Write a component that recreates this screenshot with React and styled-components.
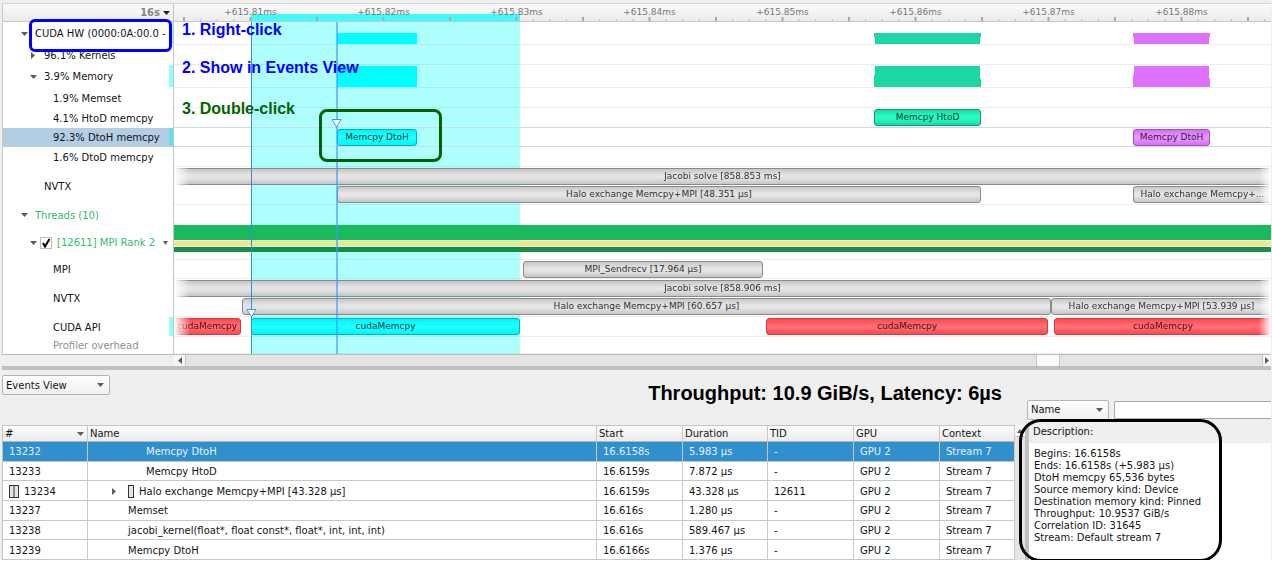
import React, { useState } from "react";
import styled, { createGlobalStyle, css } from "styled-components";

const GlobalStyle = createGlobalStyle`
  *, *::before, *::after { box-sizing: border-box; }
  body {
    margin: 0;
    background: #fff;
    color: #141414;
    font-family: "DejaVu Sans", sans-serif;
    font-size: 10px;
    line-height: 12px;
  }
  button, select, input { font: inherit; color: inherit; }
`;

/* Width of the visible time range; every position below is in these units. */
const SPAN = 1097;
const pct = (units) => `${(units / SPAN) * 100}%`;

const Window = styled.main`
  background: #efefef;
  padding: 3px 1px 0 2px;
`;

/* ---------- timeline ---------- */

const Timeline = styled.section`
  display: grid;
  grid-template-columns: 172px minmax(0, 1fr);
  border-top: 1px solid #d4d4d4;
  border-bottom: 1px solid #bdbdbd;
`;

const Tree = styled.div`
  position: relative;
  background: #fff;
  border-left: 1px solid #c8c8c8;
  border-right: 1px solid #c4c4c4;
`;

const headBar = css`
  height: 18px;
  background: linear-gradient(#fafafa, #ebebeb);
  border-bottom: 1px solid #c8c8c8;
`;

const TreeHead = styled.div`
  ${headBar}
  display: flex;
  align-items: center;
  justify-content: flex-end;
  gap: 3px;
  padding-right: 3px;
  color: #858585;
  font-weight: bold;
`;

const TreeRow = styled.div`
  display: flex;
  align-items: center;
  height: ${(p) => p.$height}px;
  padding-left: ${(p) => 17 + p.$level * 9}px;
  background: ${(p) => (p.$selected ? "#b3cde3" : "transparent")};
  color: ${(p) => p.$color || "#141414"};
`;

const Toggle = styled.button`
  display: flex;
  align-items: center;
  justify-content: center;
  flex: none;
  width: 8px;
  height: 12px;
  margin-right: 7px;
  padding: 0;
  border: 0;
  background: none;
`;

const ToggleSpace = styled.span`
  flex: none;
  width: 15px;
`;

const RowText = styled.span`
  flex: 1;
  min-width: 0;
  padding-top: 1px;
  overflow: hidden;
  white-space: nowrap;
`;

const CheckLabel = styled.label`
  position: relative;
  display: flex;
  align-items: center;
  flex: 1;
  gap: 5px;
  margin-left: -4px;
  white-space: nowrap;
`;

const CheckBox = styled.input`
  appearance: none;
  width: 12px;
  height: 12px;
  margin: 0;
  border: 1px solid #bdbdbd;
  background: #fff;
`;

const CheckMark = styled.svg`
  position: absolute;
  left: 2px;
  top: 1px;
  pointer-events: none;
`;

const MenuButton = styled(Toggle)`
  margin-right: 0;
`;

const RowMark = styled.span`
  align-self: stretch;
  flex: none;
  width: 4px;
  margin-bottom: 1px;
  background: ${(p) => (p.$on ? (p.$selected ? "#5ce4ee" : "#8cffff") : "transparent")};
`;

const Canvas = styled.div`
  position: relative;
  background: #fff;
  overflow: hidden;
`;

const Ruler = styled.div`
  ${headBar}
  position: relative;
`;

const RulerSelection = styled.div`
  position: absolute;
  left: ${(p) => pct(p.$from)};
  width: ${(p) => pct(p.$to - p.$from)};
  bottom: 0;
  height: 7px;
  background: #3ffbfb;
`;

const Ticks = styled.svg`
  position: absolute;
  left: 0;
  bottom: 0;
  width: 100%;
  height: 4px;
`;

const RulerLabels = styled.div`
  position: relative;
  display: grid;
  grid-template-columns: 10fr repeat(8, 133fr) 23fr;
  padding-top: 2px;
  color: #787878;
  font-size: 9px;
  text-align: center;

  & > :first-child { grid-column-start: 2; }
`;

const Selection = styled.div`
  position: absolute;
  left: ${(p) => pct(p.$from)};
  width: ${(p) => pct(p.$to - p.$from)};
  top: 18px;
  bottom: 0;
  background: #b0ffff;
`;

const Track = styled.div`
  position: relative;
  display: flex;
  flex-direction: column;
  gap: 1px;
  height: ${(p) => p.$height}px;
  padding-top: ${(p) => p.$top ?? 1}px;
  border-bottom: 1px solid ${(p) => (p.$blue ? "#c6dceb" : "rgba(0, 0, 0, 0.07)")};
`;

const Lane = styled.div`
  display: grid;
  grid-template-columns: ${(p) => p.$columns};
  flex: none;
`;

const skins = {
  gray: { edge: "#8a8a8a", out: "#c6c6c6", mid: "#e4e4e4", text: "#303030" },
  cyan: { edge: "#00b4b8", out: "#00f4f8", mid: "#1effff", text: "#083c3e" },
  teal: { edge: "#12996f", out: "#1ad9a4", mid: "#27fac4", text: "#083c2c" },
  violet: { edge: "#a14fbc", out: "#d76cf8", mid: "#e695ff", text: "#381842" },
  red: { edge: "#cf3c46", out: "#ff4750", mid: "#ff6c72", text: "#461216" },
};

const fades = {
  left: "linear-gradient(to right, transparent, #000 16px)",
  right: "linear-gradient(to left, transparent, #000 12px)",
  both: "linear-gradient(to right, transparent, #000 16px, #000 calc(100% - 12px), transparent)",
};

const Bar = styled.div`
  height: 17px;
  padding: 0 3px;
  overflow: hidden;
  border: 1px solid ${(p) => skins[p.$skin].edge};
  border-radius: 3px;
  background: linear-gradient(
    ${(p) => skins[p.$skin].out},
    ${(p) => skins[p.$skin].mid} 40%,
    ${(p) => skins[p.$skin].mid} 60%,
    ${(p) => skins[p.$skin].out}
  );
  color: ${(p) => skins[p.$skin].text};
  font-size: 9px;
  line-height: 14px;
  text-align: center;
  text-overflow: ellipsis;
  white-space: nowrap;
  ${(p) => p.$fade && css`
    mask-image: ${fades[p.$fade]};
    ${p.$fade !== "right" && "border-left: 0; border-top-left-radius: 0; border-bottom-left-radius: 0;"}
    ${p.$fade !== "left" && "border-right: 0; border-top-right-radius: 0; border-bottom-right-radius: 0;"}
  `}
`;

const notches = {
  none: "none",
  low: "polygon(0 0, 100% 0, 100% 40%, calc(100% - 1px) 40%, calc(100% - 1px) 100%, 1px 100%, 1px 40%, 0 40%)",
  high: "polygon(1px 0, calc(100% - 1px) 0, calc(100% - 1px) 60%, 100% 60%, 100% 100%, 0 100%, 0 40%, 1px 40%)",
};

const Load = styled.div`
  height: ${(p) => p.$height}px;
  background: ${(p) => p.$color};
  clip-path: ${(p) => notches[p.$notch]};
`;

const Stripe = styled.div`
  flex: none;
  height: ${(p) => p.$height}px;
  background: ${(p) => p.$color};
`;

const Cursor = styled.div`
  position: absolute;
  left: ${(p) => pct(p.$at)};
  top: 18px;
  bottom: 0;
  width: ${(p) => (p.$soft ? 2 : 1)}px;
  background: ${(p) => (p.$soft ? "rgba(60, 150, 255, 0.6)" : "#2f8fe0")};
`;

const CursorHead = styled.svg`
  position: absolute;
  left: -5px;
  top: ${(p) => p.$top}px;
`;

/* ---------- callouts drawn over the window ---------- */

const Note = styled.p`
  position: absolute;
  left: 8px;
  top: ${(p) => p.$top}px;
  margin: 0;
  color: ${(p) => p.$color};
  font: bold 16px/18px "Liberation Sans", sans-serif;
  white-space: nowrap;
`;

const Outline = styled.div`
  position: absolute;
  border: 3px solid ${(p) => p.$color};
  border-radius: ${(p) => p.$radius}px;
  pointer-events: none;
`;

const TreeOutline = styled(Outline)`
  left: 26px;
  right: 1px;
  top: 15px;
  height: 33px;
`;

const EventOutline = styled(Outline)`
  left: ${pct(145)};
  width: ${pct(123)};
  top: 105px;
  height: 53px;
`;

const DetailsOutline = styled(Outline)`
  left: -10px;
  width: 203px;
  top: -6px;
  bottom: -2px;
`;

/* ---------- scroll bars ---------- */

const HScroll = styled.div`
  display: grid;
  grid-template-columns: 12px 850fr 24px 202fr 9px;
  height: 11px;
  margin-left: 172px;
  background: #e4e4e4;

  & > :last-child { grid-column: 5; }
`;

const ScrollButton = styled.button`
  display: flex;
  align-items: center;
  justify-content: center;
  padding: 0;
  border: 0 solid #c6c6c6;
  border-width: ${(p) => p.$edge};
  background: #f7f7f7;
`;

const Thumb = styled.div`
  grid-column: 3;
  border: solid #c6c6c6;
  border-width: 0 1px;
  background: #fafafa;
`;

const Splitter = styled.div`
  height: 4px;
  background: #c0c0c0;
`;

/* ---------- events view ---------- */

const Events = styled.section`
  display: grid;
  grid-template-columns: minmax(0, 1fr) 246px;
  grid-template-rows: 55px 135px;
`;

const Toolbar = styled.div`
  display: flex;
  justify-content: space-between;
  align-items: flex-start;
  padding: 5px 23px 0 0;
`;

const Headline = styled.h1`
  margin: 6px 0 0;
  color: #000;
  font: bold 20px/24px "Liberation Sans", sans-serif;
  white-space: nowrap;
`;

const Filter = styled.div`
  display: flex;
  align-items: center;
  gap: 5px;
  padding: 24px 0 0 2px;
`;

const Picker = styled.div`
  position: relative;
  flex: none;
  width: ${(p) => p.$width}px;

  svg { position: absolute; right: 6px; top: 8px; pointer-events: none; }
`;

const Select = styled.select`
  appearance: none;
  display: block;
  width: 100%;
  height: 20px;
  padding: 1px 3px 0;
  border: 1px solid #b4b4b4;
  border-radius: 2px;
  background: linear-gradient(#fefefe, #f0f0f0);
`;

const SearchBox = styled.input`
  flex: 1;
  min-width: 0;
  height: 18px;
  padding: 0 4px;
  border: 1px solid #a8a8a8;
  border-right: 0;
  border-radius: 2px 0 0 2px;
  background: #fff;
`;

const TableArea = styled.div`
  display: grid;
  grid-template-columns: minmax(0, 1fr) 10px;
`;

const Table = styled.table`
  width: 100%;
  height: 135px;
  table-layout: fixed;
  border-collapse: separate;
  border-spacing: 0;
  border-top: 1px solid #c4c4c4;
  border-left: 1px solid #c0c0c0;
  background: #fff;
`;

const Th = styled.th`
  width: ${(p) => (p.$width ? `${p.$width}px` : "auto")};
  height: 16px;
  padding: 1px 2px 0;
  border-right: 1px solid #c8c8c8;
  border-bottom: 1px solid #b4b4b4;
  background: linear-gradient(#fcfcfc, #ececec);
  font-weight: normal;
  text-align: left;
`;

const ThInner = styled.span`
  display: flex;
  align-items: center;
  justify-content: space-between;
  padding-right: 1px;
`;

const Td = styled.td`
  padding: 2px 0 0 ${(p) => p.$indent ?? 6}px;
  border-right: 1px solid #c8c8c8;
  border-bottom: 1px solid #c8c8c8;
  white-space: nowrap;
`;

const Tr = styled.tr`
  background: ${(p) => (p.$selected ? "#308fcd" : "#fff")};
  color: ${(p) => (p.$selected ? "#e4f1fb" : "#141414")};
`;

const CellLine = styled.span`
  display: flex;
  align-items: center;
  gap: 5px;
  height: 12px;
`;

const CellToggle = styled(Toggle)`
  margin-right: 5px;
`;

const VScroll = styled.div`
  display: grid;
  grid-template-rows: 12px 1fr;
  background: #e4e4e4;
`;

const Details = styled.aside`
  position: relative;
  display: flex;
  flex-direction: column;
  border-left: 4px solid #c0c0c0;
`;

const DetailsTitle = styled.h2`
  height: 18px;
  margin: 0;
  padding: 1px 0 0 4px;
  font-size: 10px;
  font-weight: normal;
  line-height: 12px;
`;

const DetailsBody = styled.div`
  flex: 1;
  padding: 5px 0 0 5px;
  background: #fff;
  white-space: nowrap;
`;

/* ---------- glyphs ---------- */

const Down = ({ color = "#5c5c5c", w = 7 }) => (
  <svg width={w} height="4" viewBox="0 0 8 4" preserveAspectRatio="none" aria-hidden="true">
    <path d="M0 0H8L4 4Z" fill={color} />
  </svg>
);

const Side = ({ flip, color = "#5c5c5c" }) => (
  <svg width="4" height="7" viewBox="0 0 4 8" preserveAspectRatio="none" aria-hidden="true">
    <path d={flip ? "M4 0V8L0 4Z" : "M0 0V8L4 4Z"} fill={color} />
  </svg>
);

const Up = () => (
  <svg width="6" height="4" viewBox="0 0 8 4" preserveAspectRatio="none" aria-hidden="true">
    <path d="M0 4H8L4 0Z" fill="#5c5c5c" />
  </svg>
);

const RangeIcon = ({ double }) => (
  <svg width={double ? 10 : 6} height="13" aria-hidden="true">
    <rect x="0.5" y="0.5" width={double ? 9 : 5} height="12" fill="#e6e6e6" stroke="#333" />
    {double && <path d="M5 0V13" stroke="#333" />}
  </svg>
);

const Marker = ({ top }) => (
  <CursorHead $top={top} width="11" height="9" aria-hidden="true">
    <path d="M1 0.5H10L5.5 8Z" fill="#fff" stroke="#3f97ea" />
  </CursorHead>
);

/* ---------- data ---------- */

const GREEN = "#2dbd69";

const tree = [
  { text: "CUDA HW (0000:0A:00.0 -", level: 0, height: 23, toggle: "open", mark: true },
  { text: "96.1% Kernels", level: 1, height: 20, toggle: "closed" },
  { text: "3.9% Memory", level: 1, height: 23, toggle: "open", mark: true },
  { text: "1.9% Memset", level: 2, height: 20 },
  { text: "4.1% HtoD memcpy", level: 2, height: 20 },
  { text: "92.3% DtoH memcpy", level: 2, height: 19, selected: true, mark: true },
  { text: "1.6% DtoD memcpy", level: 2, height: 20 },
  { text: "NVTX", level: 1, height: 38 },
  { text: "Threads (10)", level: 0, height: 20, toggle: "open", color: GREEN },
  { text: "[12611] MPI Rank 2", level: 1, height: 35, toggle: "open", color: GREEN, check: true },
  { text: "MPI", level: 2, height: 19 },
  { text: "NVTX", level: 2, height: 38 },
  { text: "CUDA API", level: 2, height: 20, mark: true },
  { text: "Profiler overhead", level: 2, height: 17, color: "#8f8f8f" },
];

const bar = (from, to, skin, text, fade) => ({ from, to, skin, text, fade });
const load = (from, to, color, notch) => ({ from, to, color, notch });

const loads = (notch) => [
  load(163, 243, "#00ffff", "none"),
  load(700, 807, "#1cd6a3", notch),
  load(959, 1036, "#de72ff", notch),
];

const tracks = [
  { height: 23, top: 11, loadHeight: 11, lanes: [loads("low")] },
  { height: 20 },
  { height: 23, loadHeight: 21, lanes: [loads("high")] },
  { height: 20 },
  { height: 20, blue: true, lanes: [[bar(700, 807, "teal", "Memcpy HtoD")]] },
  {
    height: 19,
    blue: true,
    lanes: [[bar(163, 243, "cyan", "Memcpy DtoH"), bar(959, 1036, "violet", "Memcpy DtoH")]],
  },
  { height: 20 },
  {
    height: 38,
    lanes: [
      [bar(0, SPAN, "gray", "Jacobi solve [858.853 ms]", "both")],
      [
        bar(163, 807, "gray", "Halo exchange Memcpy+MPI [48.351 µs]"),
        bar(959, SPAN, "gray", "Halo exchange Memcpy+...", "right"),
      ],
    ],
  },
  { height: 20 },
  { height: 35, top: 0, stripes: true },
  { height: 19, lanes: [[bar(349, 589, "gray", "MPI_Sendrecv [17.964 µs]")]] },
  {
    height: 38,
    lanes: [
      [bar(0, SPAN, "gray", "Jacobi solve [858.906 ms]", "both")],
      [
        bar(68, 877, "gray", "Halo exchange Memcpy+MPI [60.657 µs]"),
        bar(877, SPAN, "gray", "Halo exchange Memcpy+MPI [53.939 µs]", "right"),
      ],
    ],
  },
  {
    height: 20,
    lanes: [[
      bar(0, 67, "red", "cudaMemcpy", "left"),
      bar(77, 346, "cyan", "cudaMemcpy"),
      bar(592, 874, "red", "cudaMemcpy"),
      bar(880, SPAN, "red", "cudaMemcpy", "right"),
    ]],
  },
  { height: 17 },
];

const rulerLabels = [81, 82, 83, 84, 85, 86, 87, 88].map((n) => `+615.${n}ms`);

const columns = [
  { name: "#", width: 85 },
  { name: "Name" },
  { name: "Start", width: 86 },
  { name: "Duration", width: 85 },
  { name: "TID", width: 86 },
  { name: "GPU", width: 86 },
  { name: "Context", width: 75 },
];

const events = [
  { id: 13232, name: "Memcpy DtoH", deep: true, start: "16.6158s", duration: "5.983 µs", tid: "-" },
  { id: 13233, name: "Memcpy HtoD", deep: true, start: "16.6159s", duration: "7.872 µs", tid: "-" },
  { id: 13234, name: "Halo exchange Memcpy+MPI [43.328 µs]", range: true, start: "16.6159s", duration: "43.328 µs", tid: "12611" },
  { id: 13237, name: "Memset", start: "16.616s", duration: "1.280 µs", tid: "-" },
  { id: 13238, name: "jacobi_kernel(float*, float const*, float*, int, int, int)", start: "16.616s", duration: "589.467 µs", tid: "-" },
  { id: 13239, name: "Memcpy DtoH", start: "16.6166s", duration: "1.376 µs", tid: "-" },
];

const details = [
  "Begins: 16.6158s",
  "Ends: 16.6158s (+5.983 µs)",
  "DtoH memcpy 65,536 bytes",
  "Source memory kind: Device",
  "Destination memory kind: Pinned",
  "Throughput: 10.9537 GiB/s",
  "Correlation ID: 31645",
  "Stream: Default stream 7",
];

/* Alternating gap / item column widths for one lane. */
function laneColumns(items) {
  let at = 0;
  const parts = [];
  items.forEach(({ from, to }) => {
    parts.push(`minmax(0, ${from - at}fr)`, `minmax(0, ${to - from}fr)`);
    at = to;
  });
  parts.push(`minmax(0, ${SPAN - at}fr)`);
  return parts.join(" ");
}

function TimeLane({ items, loadHeight }) {
  return (
    <Lane $columns={laneColumns(items)}>
      {items.map((it) => (
        <React.Fragment key={it.from}>
          <span />
          {loadHeight ? (
            <Load $height={loadHeight} $color={it.color} $notch={it.notch} />
          ) : (
            <Bar $skin={it.skin} $fade={it.fade}>{it.text}</Bar>
          )}
        </React.Fragment>
      ))}
    </Lane>
  );
}

function TreeItem({ row }) {
  const [checked, setChecked] = useState(true);
  return (
    <TreeRow $height={row.height} $level={row.level} $selected={row.selected} $color={row.color}>
      {row.toggle ? (
        <Toggle aria-label={`Toggle ${row.text}`}>{row.toggle === "open" ? <Down /> : <Side />}</Toggle>
      ) : (
        <ToggleSpace />
      )}
      {row.check ? (
        <>
          <CheckLabel>
            <CheckBox type="checkbox" checked={checked} onChange={() => setChecked(!checked)} />
            {checked && (
              <CheckMark width="9" height="10" aria-hidden="true">
                <path d="M1 5L3 8.5L7.5 1" fill="none" stroke="#000" strokeWidth="2" />
              </CheckMark>
            )}
            {row.text}
          </CheckLabel>
          <MenuButton aria-label="Thread menu"><Down w={5} /></MenuButton>
        </>
      ) : (
        <RowText>{row.text}</RowText>
      )}
      <RowMark $on={row.mark} $selected={row.selected} />
    </TreeRow>
  );
}

export default function App() {
  const [selected, setSelected] = useState(13232);
  return (
    <>
      <GlobalStyle />
      <Window>
        <Timeline>
          <Tree>
            <TreeHead>16s <Down color="#222" /></TreeHead>
            {tree.map((row, i) => <TreeItem key={i} row={row} />)}
            <TreeOutline $color="#0000ff" $radius={6} />
          </Tree>
          <Canvas>
            <Ruler>
              <RulerSelection $from={77} $to={346} />
              <Ticks aria-hidden="true">
                {Array.from({ length: 66 }, (_, i) => {
                  const x = pct(10 + (i * 133) / 8);
                  const major = i % 4 === 0;
                  return (
                    <line key={i} x1={x} x2={x} y1={major ? 0 : 2} y2="4" stroke={major ? "#a8a8a8" : "#b8b8b8"} strokeWidth={major ? 2 : 1} />
                  );
                })}
              </Ticks>
              <RulerLabels>
                {rulerLabels.map((t) => <span key={t}>{t}</span>)}
              </RulerLabels>
            </Ruler>
            <Selection $from={77} $to={346} />
            {tracks.map((t, i) => (
              <Track key={i} $height={t.height} $top={t.top} $blue={t.blue}>
                {t.stripes && (
                  <>
                    <Stripe $height={15} $color="#1bb95d" />
                    <Stripe $height={5} $color="#f0e68a" />
                    <Stripe $height={5} $color="#158f47" />
                  </>
                )}
                {t.lanes?.map((items, n) => <TimeLane key={n} items={items} loadHeight={t.loadHeight} />)}
              </Track>
            ))}
            <Cursor $at={77}><Marker top={287} /></Cursor>
            <Cursor $at={162} $soft><Marker top={97} /></Cursor>
            <Note $top={17} $color="#0000ff">1. Right-click</Note>
            <Note $top={55} $color="#0000ff">2. Show in Events View</Note>
            <Note $top={96} $color="#006400">3. Double-click</Note>
            <EventOutline $color="#006400" $radius={8} />
          </Canvas>
        </Timeline>
        <HScroll>
          <ScrollButton $edge="0 1px 0 0" aria-label="Scroll left"><Side flip /></ScrollButton>
          <Thumb />
          <ScrollButton $edge="0 0 0 1px" aria-label="Scroll right"><Side /></ScrollButton>
        </HScroll>
        <Splitter />
        <Events>
          <Toolbar>
            <Picker $width={108}>
              <Select aria-label="View">
                <option>Events View</option>
              </Select>
              <Down />
            </Picker>
            <Headline>Throughput: 10.9 GiB/s, Latency: 6µs</Headline>
          </Toolbar>
          <Filter>
            <Picker $width={82}>
              <Select aria-label="Search column">
                <option>Name</option>
              </Select>
              <Down />
            </Picker>
            <SearchBox type="text" aria-label="Search events" />
          </Filter>
          <TableArea>
            <Table>
              <thead>
                <tr>
                  {columns.map((c) => (
                    <Th key={c.name} $width={c.width} scope="col">
                      <ThInner>{c.name}{c.name === "#" && <Down />}</ThInner>
                    </Th>
                  ))}
                </tr>
              </thead>
              <tbody>
                {events.map((e) => (
                  <Tr key={e.id} $selected={e.id === selected} onClick={() => setSelected(e.id)}>
                    <Td><CellLine>{e.range && <RangeIcon double />}{e.id}</CellLine></Td>
                    <Td $indent={e.range ? 22 : e.deep ? 58 : 40}>
                      <CellLine>
                        {e.range && <CellToggle aria-label={`Expand ${e.name}`}><Side /></CellToggle>}
                        {e.range && <RangeIcon />}
                        {e.name}
                      </CellLine>
                    </Td>
                    <Td>{e.start}</Td>
                    <Td>{e.duration}</Td>
                    <Td>{e.tid}</Td>
                    <Td>GPU 2</Td>
                    <Td>Stream 7</Td>
                  </Tr>
                ))}
              </tbody>
            </Table>
            <VScroll>
              <ScrollButton $edge="0 0 1px 0" aria-label="Scroll up"><Up /></ScrollButton>
            </VScroll>
          </TableArea>
          <Details>
            <DetailsTitle>Description:</DetailsTitle>
            <DetailsBody>
              {details.map((d) => <div key={d}>{d}</div>)}
            </DetailsBody>
            <DetailsOutline $color="#000" $radius={22} />
          </Details>
        </Events>
      </Window>
    </>
  );
}
